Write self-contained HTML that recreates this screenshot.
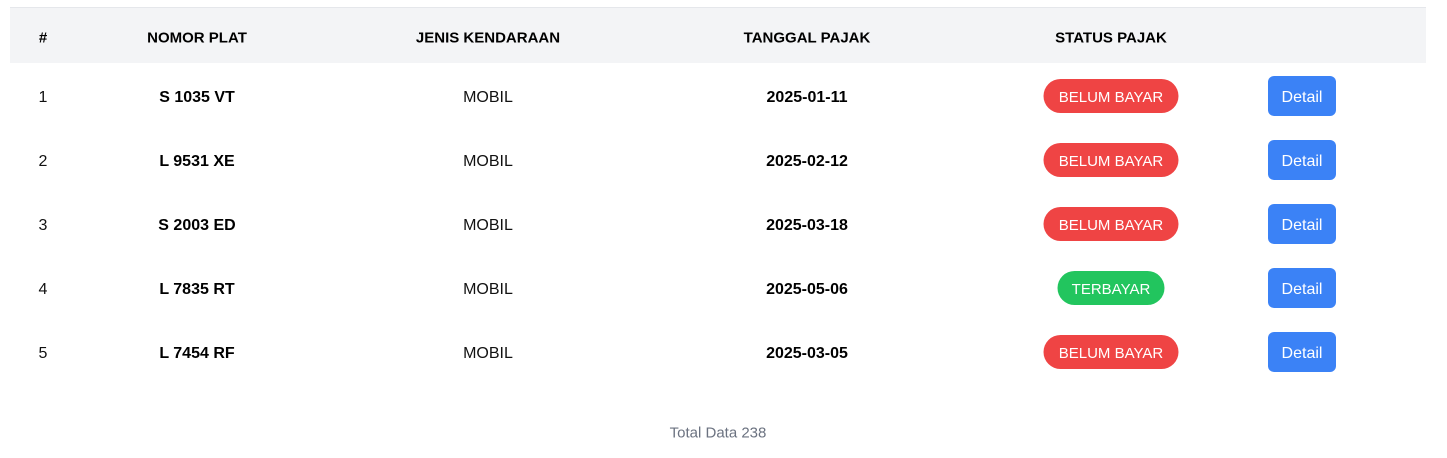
<!DOCTYPE html>
<html><head><meta charset="utf-8"><style>
body{margin:0;width:1447px;height:458px;background:#fff;font-family:"Liberation Sans","DejaVu Sans",sans-serif;position:relative;overflow:hidden;color:#111}
.hdr{position:absolute;left:10px;top:7px;width:1416px;height:56px;background:#f3f4f6;border-top:1px solid #e5e7eb;box-sizing:border-box}
.c{position:absolute;transform:translate(-50%,calc(-50% + 2px));white-space:nowrap;font-size:16px}
.h{font-weight:bold;font-size:15px;color:#000}
.b{font-weight:bold;color:#000}
.badge{position:absolute;transform:translate(-50%,-50%);height:34px;line-height:37px;border-radius:17px;color:#fff;font-size:15px;text-align:center;white-space:nowrap}
.red{background:#ef4444;width:135px}
.green{background:#22c55e;width:107px}
.btn{position:absolute;left:1268px;width:68px;height:40px;line-height:43px;background:#3b82f6;color:#fff;border-radius:6px;text-align:center;font-size:16px}
</style></head><body>
<div class="hdr"></div>
<div class="c h" style="left:43px;top:36px">#</div>
<div class="c h" style="left:197px;top:36px">NOMOR PLAT</div>
<div class="c h" style="left:488px;top:36px">JENIS KENDARAAN</div>
<div class="c h" style="left:807px;top:36px">TANGGAL PAJAK</div>
<div class="c h" style="left:1111px;top:36px">STATUS PAJAK</div>

<div class="c" style="left:43px;top:96px">1</div>
<div class="c b" style="left:197px;top:96px">S 1035 VT</div>
<div class="c" style="left:488px;top:96px">MOBIL</div>
<div class="c b" style="left:807px;top:96px">2025-01-11</div>
<div class="badge red" style="left:1111px;top:96px">BELUM BAYAR</div>
<div class="btn" style="top:76px">Detail</div>

<div class="c" style="left:43px;top:160px">2</div>
<div class="c b" style="left:197px;top:160px">L 9531 XE</div>
<div class="c" style="left:488px;top:160px">MOBIL</div>
<div class="c b" style="left:807px;top:160px">2025-02-12</div>
<div class="badge red" style="left:1111px;top:160px">BELUM BAYAR</div>
<div class="btn" style="top:140px">Detail</div>

<div class="c" style="left:43px;top:224px">3</div>
<div class="c b" style="left:197px;top:224px">S 2003 ED</div>
<div class="c" style="left:488px;top:224px">MOBIL</div>
<div class="c b" style="left:807px;top:224px">2025-03-18</div>
<div class="badge red" style="left:1111px;top:224px">BELUM BAYAR</div>
<div class="btn" style="top:204px">Detail</div>

<div class="c" style="left:43px;top:288px">4</div>
<div class="c b" style="left:197px;top:288px">L 7835 RT</div>
<div class="c" style="left:488px;top:288px">MOBIL</div>
<div class="c b" style="left:807px;top:288px">2025-05-06</div>
<div class="badge green" style="left:1111px;top:288px">TERBAYAR</div>
<div class="btn" style="top:268px">Detail</div>

<div class="c" style="left:43px;top:352px">5</div>
<div class="c b" style="left:197px;top:352px">L 7454 RF</div>
<div class="c" style="left:488px;top:352px">MOBIL</div>
<div class="c b" style="left:807px;top:352px">2025-03-05</div>
<div class="badge red" style="left:1111px;top:352px">BELUM BAYAR</div>
<div class="btn" style="top:332px">Detail</div>

<div class="c" style="left:718px;top:431px;color:#6b7280;font-size:15px">Total Data 238</div>
</body></html>
